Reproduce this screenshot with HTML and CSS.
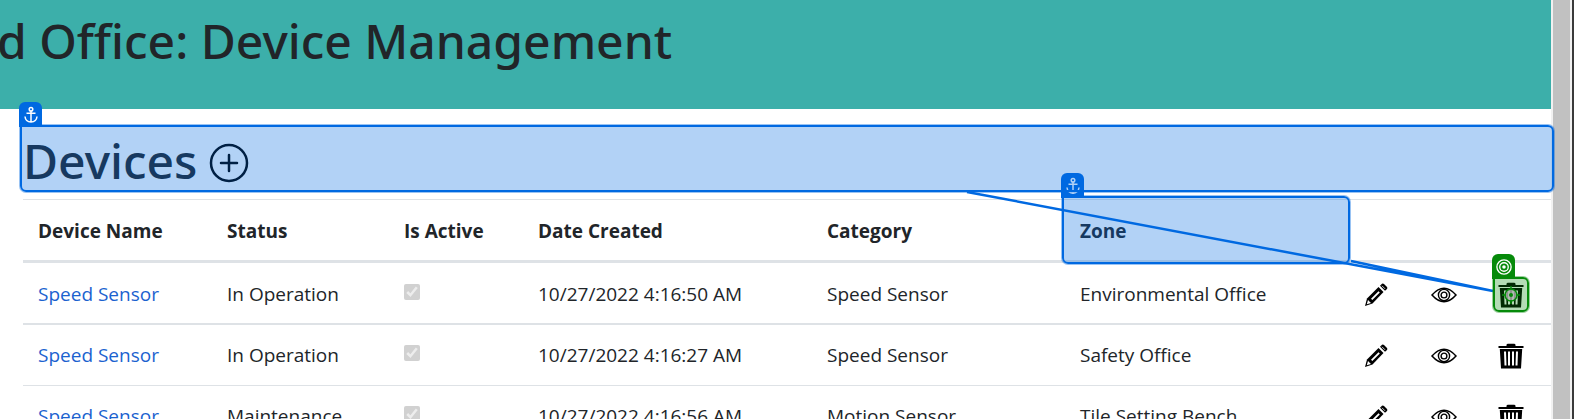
FILE: index.html
```html
<!DOCTYPE html>
<html lang="en">
<head>
<meta charset="utf-8">
<title>Device Management</title>
<link rel="stylesheet" href="styles.css">
</head>
<body>
<svg class="sprite" aria-hidden="true">
  <symbol id="pencil" viewBox="0 0 24 24">
    <path d="M1 23 L3 15.500 L14.500 4 L19.500 9 L8.500 20.500 Z" fill="#000"/>
    <path d="M16 2.800 L18 .8 Q19 0 20 1 L23 4 Q23.800 5 23 6 L21 7.800 Z" fill="#000"/>
    <path d="M2.800 21.200 L4 17 L7 20 Z M7 15.800 L14.500 8.300 L15.800 9.600 L8.300 17 Z" fill="#fff"/>
    <path d="M18 2.800 L21 5.800" stroke="#fff" stroke-width=".8"/>
  </symbol>
  <symbol id="eye" viewBox="0 0 26 16">
    <g fill="none" stroke="#000"><path d="M1 8 Q13-5.500 25 8 Q13 21.500 1 8Z" stroke-width="1.500"/><circle cx="13" cy="8" r="5.600" stroke-width="1.400"/><circle cx="13" cy="8" r="2.900" stroke-width="1.400"/></g>
  </symbol>
  <symbol id="trash" viewBox="0 0 26 26">
    <path d="M8.500 3 V2 Q8.500 .7 10 .7 H16 Q17.500 .7 17.500 2 V3 H25.500 V5 H.5 V3Z M1.800 6 H24.200 L23 25.500 H3Z" fill="#000"/>
    <path d="M7 8.500 L7.500 22.500 M11 8.500 V22.500 M15 8.500 V22.500 M19 8.500 L18.500 22.500" stroke="#fff" stroke-width="2"/>
  </symbol>
  <symbol id="anchor" viewBox="0 0 16 18">
    <g fill="none" stroke="#fff" stroke-width="1.500"><circle cx="8" cy="3.200" r="1.800"/><path d="M8 5 V16 M3.500 7.300 H12.500 M2 10.500 Q2.500 15.800 8 16 Q13.500 15.800 14 10.500"/></g>
  </symbol>
</svg>
<div class="window">
  <div class="page">
    <header class="banner"><h1 class="title">d Office: Device Management</h1></header>
    <main class="content">
      <div class="section-head">
        <h2 class="title">Devices</h2>
        <button class="add" type="button" aria-label="Add device"><svg viewBox="0 0 40 40"><g fill="none" stroke="#000" stroke-width="2.500"><circle cx="20" cy="20" r="18"/><path d="M20 12 V28 M12 20 H28" stroke-linecap="round"/></g></svg></button>
        <div class="mark mark-head"><span class="tag"><svg><use href="#anchor"/></svg></span></div>
      </div>
      <table class="devices">
        <colgroup><col class="c-name"><col class="c-status"><col class="c-active"><col class="c-date"><col class="c-category"><col class="c-zone"><col class="c-tool"><col class="c-tool"><col class="c-tool"></colgroup>
        <thead><tr><th>Device Name</th><th>Status</th><th>Is Active</th><th>Date Created</th><th>Category</th><th class="marked">Zone<div class="mark mark-zone"><span class="tag"><svg><use href="#anchor"/></svg></span></div></th><th></th><th></th><th></th></tr></thead>
        <tbody>
          <tr class="current"><td><a href="#">Speed Sensor</a></td><td>In Operation</td><td><input type="checkbox" aria-label="Is active" checked disabled></td><td>10/27/2022 4:16:50 AM</td><td>Speed Sensor</td><td>Environmental Office</td>
            <td><button class="tool" type="button" aria-label="Edit"><svg class="i-pencil"><use href="#pencil"/></svg></button></td><td><button class="tool" type="button" aria-label="View"><svg class="i-eye"><use href="#eye"/></svg></button></td>
            <td><button class="tool" type="button" aria-label="Delete"><svg class="i-trash"><use href="#trash"/></svg><span class="mark mark-target"><span class="tag"><svg viewBox="0 0 18 18"><g fill="none" stroke="#fff" stroke-width="1.500"><circle cx="9" cy="9" r="8"/><circle cx="9" cy="9" r="4.800"/></g><circle cx="9" cy="9" r="2" fill="#fff"/></svg></span><svg class="sight" viewBox="0 0 18 18"><circle cx="9" cy="9" r="6" fill="#b0b0b0" fill-opacity=".8" stroke="#068a0a" stroke-width="1.500"/><path d="M9 0 V4 M9 14 V18 M0 9 H4 M14 9 H18" stroke="#068a0a" stroke-width="1.500"/><circle cx="9" cy="9" r="2" fill="#068a0a"/></svg></span></button></td></tr>
          <tr><td><a href="#">Speed Sensor</a></td><td>In Operation</td><td><input type="checkbox" aria-label="Is active" checked disabled></td><td>10/27/2022 4:16:27 AM</td><td>Speed Sensor</td><td>Safety Office</td>
            <td><button class="tool" type="button" aria-label="Edit"><svg class="i-pencil"><use href="#pencil"/></svg></button></td><td><button class="tool" type="button" aria-label="View"><svg class="i-eye"><use href="#eye"/></svg></button></td><td><button class="tool" type="button" aria-label="Delete"><svg class="i-trash"><use href="#trash"/></svg></button></td></tr>
          <tr><td><a href="#">Speed Sensor</a></td><td>Maintenance</td><td><input type="checkbox" aria-label="Is active" checked disabled></td><td>10/27/2022 4:16:56 AM</td><td>Motion Sensor</td><td>Tile Setting Bench</td>
            <td><button class="tool" type="button" aria-label="Edit"><svg class="i-pencil"><use href="#pencil"/></svg></button></td><td><button class="tool" type="button" aria-label="View"><svg class="i-eye"><use href="#eye"/></svg></button></td><td><button class="tool" type="button" aria-label="Delete"><svg class="i-trash"><use href="#trash"/></svg></button></td></tr>
        </tbody>
      </table>
    </main>
    <svg class="links" viewBox="0 0 1551 419" preserveAspectRatio="none"><path d="M967 192 L1493 291 M1351 261 L1493 291" fill="none" stroke="#0069e1" stroke-width="2.500"/></svg>
  </div>
  <div class="scrollbar"></div>
</div>
</body>
</html>
```
FILE: styles.css
```css
* { box-sizing: border-box; }
body { margin: 0; height: 100vh; overflow: hidden; background: #fff; color: #212529; font: 19px/30px "Open Sans", "Noto Sans", sans-serif; }
.sprite { position: absolute; width: 0; height: 0; }
.window { display: flex; height: 100vh; border-right: 2px solid #3a3a3a; }
.page { position: relative; flex: 1; min-width: 0; }
.scrollbar { width: 21px; background: #c1c1c1; border: solid #f1f1f1; border-width: 0 2px; }
.title { margin: 0; font-family: "Noto Sans", "Open Sans", sans-serif; font-size: 48px; line-height: 60px; font-weight: 500; white-space: nowrap; }
.banner { height: 109px; padding-top: 11px; background: #3cafaa; overflow: hidden; }
.banner .title { margin-left: -3px; }
.content { padding: 16px 0 0 23px; }
.section-head { position: relative; display: flex; align-items: center; gap: 12px; height: 74px; padding-bottom: 2px; }
.add { display: flex; align-items: flex-end; width: 40px; height: 44px; padding: 0; border: 0; background: none; }
.add svg { width: 40px; height: 40px; }
.devices { width: 100%; table-layout: fixed; border-collapse: separate; border-spacing: 0; }
.c-name { width: 189px; } .c-status { width: 177px; } .c-active { width: 134px; } .c-date { width: 289px; }
.c-category { width: 253px; } .c-zone { width: 285px; } .c-tool { width: 67px; }
th, td { padding: 0 15px; text-align: left; white-space: nowrap; }
th { height: 64px; padding-top: 2px; border-top: 1px solid #dee2e6; border-bottom: 3px solid #dee2e6; font-weight: 700; }
td { height: 61px; border-bottom: 1px solid #dee2e6; }
.current td { height: 62px; padding-top: 2px; border-bottom-width: 2px; }
.marked { position: relative; }
a { color: #1b62cf; text-decoration: none; }
input { display: block; width: 16px; height: 16px; margin: 0 0 4px; }
td:nth-child(n+7) { padding-left: 14px; }
.tool { position: relative; display: flex; align-items: center; width: 26px; height: 28px; padding: 2px 0 0; border: 0; background: none; }
.i-pencil { width: 24px; height: 24px; }
.i-eye { width: 26px; height: 16px; }
.i-trash { width: 26px; height: 26px; }
.mark { position: absolute; border: 2px solid #0069e1; border-radius: 0 6px 6px 6px; background: rgba(0, 105, 225, .3); box-shadow: 0 0 0 1px rgba(0, 105, 225, .4); }
.mark-head { inset: 0 -3px 7px -3px; z-index: 2; }
.mark-zone { inset: -4px 0 -4px -3px; }
.mark-target { inset: -3px -5px -4px; border-color: #068a0a; background: rgba(6, 138, 10, .3); box-shadow: 0 0 0 1px rgba(6, 138, 10, .4); z-index: 2; }
.tag { position: absolute; left: -3px; bottom: 100%; display: flex; align-items: center; justify-content: center; width: 23px; height: 25px; border-radius: 6px 6px 0 0; background: #0069e1; }
.tag svg { width: 16px; height: 18px; }
.mark-target .tag { background: #068a0a; }
.sight { position: absolute; left: 7px; top: 7px; width: 18px; height: 18px; }
.links { position: absolute; inset: 0; width: 100%; height: 419px; pointer-events: none; z-index: 1; }
```
